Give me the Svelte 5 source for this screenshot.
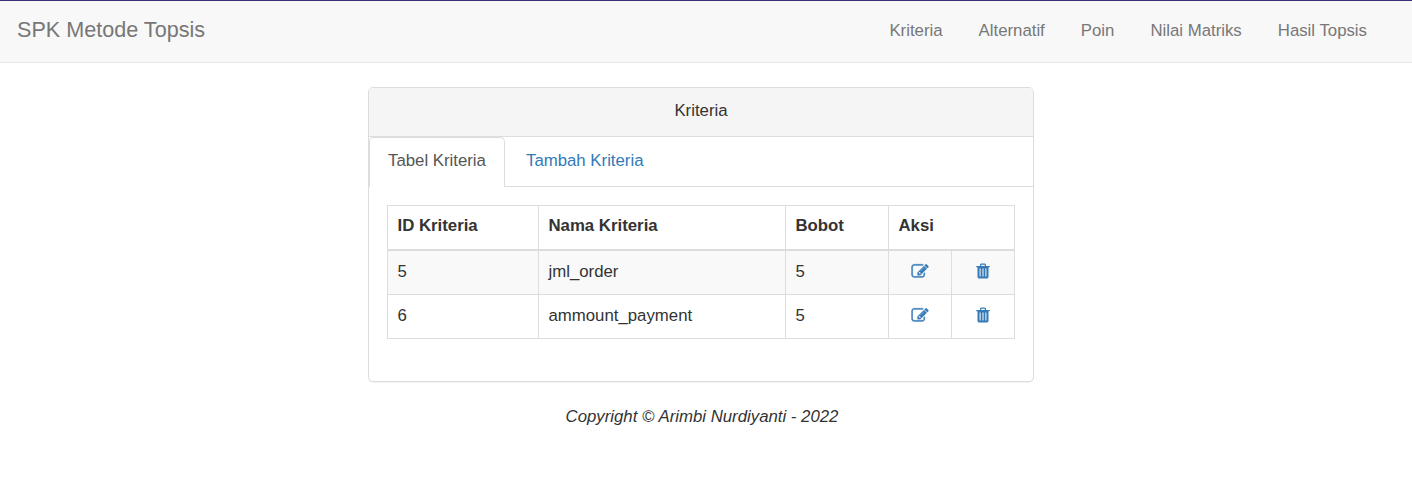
<script>
  const links = ['Kriteria', 'Alternatif', 'Poin', 'Nilai Matriks', 'Hasil Topsis'];
  const rows = [
    { id: 5, name: 'jml_order', weight: 5 },
    { id: 6, name: 'ammount_payment', weight: 5 }
  ];
</script>

<nav>
  <a class="brand" href="#top">SPK Metode Topsis</a>
  <div class="links">
    {#each links as link}<a href="#menu">{link}</a>{/each}
  </div>
</nav>
<main>
  <section class="panel">
    <header>Kriteria</header>
    <div class="tabs">
      <a class="active" href="#table">Tabel Kriteria</a>
      <a href="#add">Tambah Kriteria</a>
    </div>
    <div class="body">
      <table>
        <colgroup><col style="width:151px" /><col style="width:247px" /><col style="width:103px" /><col style="width:63px" /><col style="width:63px" /></colgroup>
        <thead>
          <tr><th>ID Kriteria</th><th>Nama Kriteria</th><th>Bobot</th><th colspan="2">Aksi</th></tr>
        </thead>
        <tbody>
          {#each rows as row}
            <tr>
              <td>{row.id}</td><td>{row.name}</td><td>{row.weight}</td>
              <td class="icon"><a href="#edit" aria-label="Edit"><svg class="edit" width="17" height="17" viewBox="0 0 1792 1792"><path d="M888 1184l116-116-152-152-116 116v56h96v96h56zm440-720q-16-16-33 1l-350 350q-17 17-1 33t33-1l350-350q17-17 1-33zm80 594v190q0 119-84.500 203.500t-203.500 84.500h-832q-119 0-203.500-84.500t-84.500-203.500v-832q0-119 84.500-203.500t203.500-84.500h832q63 0 117 25 15 7 18 23 3 17-9 29l-49 49q-14 14-32 8-23-6-45-6h-832q-66 0-113 47t-47 113v832q0 66 47 113t113 47h832q66 0 113-47t47-113v-126q0-13 9-22l64-64q15-15 35-7t20 29zm-96-738l288 288-672 672h-288v-288zm444 132l-92 92-288-288 92-92q28-28 68-28t68 28l152 152q28 28 28 68t-28 68z"/></svg></a></td>
              <td class="icon"><a href="#delete" aria-label="Delete"><svg width="14" height="16" viewBox="0 0 14 16"><path fill-rule="evenodd" d="M4 3V1.500L5 .5h4l1 1V3H13.700v1.300h-1.200v10l-1 1.200H2.500l-1-1.200v-10H.3V3zM5.200 3h3.600V1.700H5.200zM3.600 5.500v8h1v-8zm2.900 0v8h1v-8zm2.900 0v8h1v-8z"/></svg></a></td>
            </tr>
          {/each}
        </tbody>
      </table>
    </div>
  </section>
  <footer>Copyright © Arimbi Nurdiyanti - 2022</footer>
</main>

<style>
  :global(body) { margin: 0; background: #fff; font: 16.8px/24px "Liberation Sans", Arial, sans-serif; color: #333; }
  :global(*) { box-sizing: border-box; }
  a { color: #337ab7; text-decoration: none; }
  nav { height: 63px; border-top: 1px solid #392e78; border-bottom: 1px solid #e7e7e7; background: #f8f8f8; display: flex; justify-content: space-between; padding: 0 27px 0 17px; }
  nav a { color: #777; }
  .brand { font-size: 21.6px; padding-top: 17px; }
  .links { display: flex; }
  .links a { padding: 18px 18px 0; }
  main { width: 666px; margin: 24px 0 0 368px; }
  .panel { height: 295px; border: 1px solid #ddd; border-radius: 5px; box-shadow: 0 1px 1px rgba(0,0,0,.05); }
  header { height: 49px; background: #f5f5f5; border-bottom: 1px solid #ddd; border-radius: 4px 4px 0 0; text-align: center; padding-top: 11px; }
  .tabs { display: flex; height: 50px; border-bottom: 1px solid #ddd; gap: 2px; }
  .tabs a { height: 50px; padding: 11px 18px 0; border: 1px solid transparent; border-bottom: 0; }
  .tabs .active { width: 136px; color: #555; background: #fff; border-color: #ddd; border-radius: 5px 5px 0 0; }
  .body { padding: 18px; }
  table { width: 628px; table-layout: fixed; border-collapse: collapse; border: 1px solid #ddd; }
  th, td { border: 1px solid #ddd; height: 44px; padding: 9px 9.500px 0; text-align: left; vertical-align: top; }
  th { border-bottom: 2px solid #ddd; padding-top: 8px; }
  tbody tr:first-child { background: #f9f9f9; }
  tbody tr:first-child td { height: 44.500px; }
  .icon { padding: 12px 0 0; }
  svg { display: block; margin: 0 auto; fill: #337ab7; }
  .edit { width: 18px; height: 17px; stroke: #337ab7; stroke-width: 35; }
  footer { text-align: center; font-style: italic; padding: 23px 0 0 2px; }
</style>
